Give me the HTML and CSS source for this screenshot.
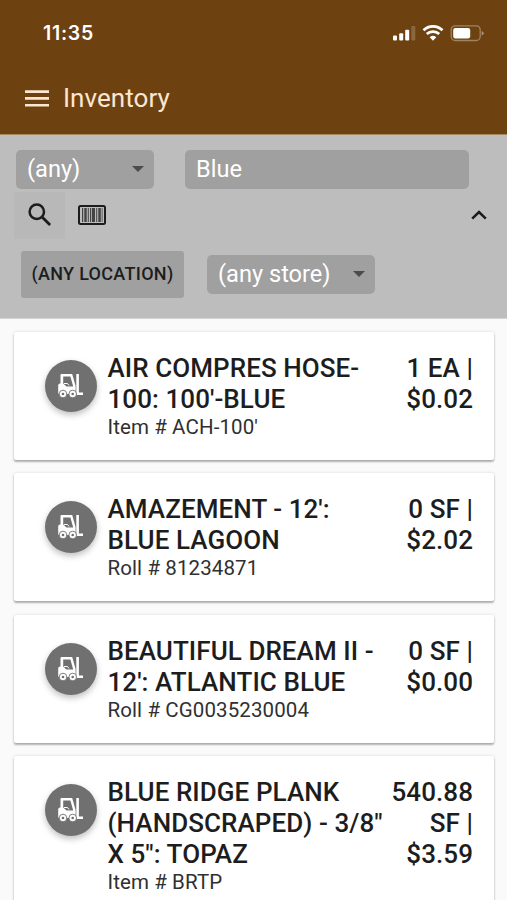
FILE: index.html
```html
<!DOCTYPE html>
<html lang="en">
<head>
<meta charset="utf-8">
<title>Inventory</title>
<link rel="stylesheet" href="styles.css">
</head>
<body>
<svg class="defs" aria-hidden="true">
  <symbol id="forklift" viewBox="0 0 26 24">
    <path fill="currentColor" fill-rule="evenodd" d="M3.500 0h10.700l3.400 12V20H1.200Q.2 20 .2 19V11.500Q.2 9.500 2 9.500h.5V1.200Q2.500 0 3.500 0zM5.200 2.400V9.500L8.500 12.400h6.700L12.400 2.400z"/>
    <path fill="currentColor" d="M18.300 0h2.600v18.500H25v2.600h-6.700z"/>
    <path fill="none" stroke="currentColor" stroke-width="1" d="M6 9.500h3.500l1.500 2"/>
    <g fill="currentColor" stroke="#707070" stroke-width=".9"><circle cx="5" cy="20" r="3.800"/><circle cx="14.700" cy="20" r="3.800"/></g>
    <g fill="#707070"><circle cx="5" cy="20" r="1.300"/><circle cx="14.700" cy="20" r="1.300"/></g>
  </symbol>
</svg>
<header class="top">
  <div class="status">
    <span class="time">11:35</span>
    <svg class="indicators" width="92" height="18" viewBox="0 0 92 18" fill="#fff">
      <rect x="1" y="11.500" width="4" height="5" rx="1"/>
      <rect x="7.200" y="9.200" width="4" height="7.300" rx="1"/>
      <rect x="13.200" y="5.800" width="4" height="10.700" rx="1"/>
      <rect x="19.300" y="2" width="4" height="14.500" rx="1" opacity=".2"/>
      <g fill="none" stroke="#fff" stroke-width="2.800"><path d="M31.500 6.300a13.400 13.400 0 0 1 19 0"/><path d="M34.800 10.100a8.800 8.800 0 0 1 12.400 0"/></g>
      <path d="M41 16.800l-3.300-3.600a5 5 0 0 1 6.600 0z"/>
      <rect x="59.200" y="1.900" width="29" height="14.600" rx="4" fill="none" stroke="#fff" stroke-width="1.300" opacity=".35"/>
      <rect x="61.200" y="3.900" width="17" height="10.600" rx="2.200"/>
      <path d="M89.700 7q2 .7 2 2.200t-2 2.200z" opacity=".45"/>
    </svg>
  </div>
  <div class="bar">
    <svg class="menu" width="24" height="17" viewBox="0 0 24 17" fill="currentColor"><path d="M0 .2h24v2.700H0zM0 7.100h24v2.700H0zM0 13.900h24v2.700H0z"/></svg>
    <h1>Inventory</h1>
  </div>
</header>
<section class="filters">
  <div class="row fields">
    <div class="field any">(any)<i class="caret"></i></div>
    <div class="field search">Blue</div>
  </div>
  <div class="row tools">
    <button class="find" aria-label="Search"><svg width="24" height="24" viewBox="0 0 24 24" fill="none" stroke="#1c1c1c"><circle cx="8.800" cy="8.800" r="7.200" stroke-width="2.500"/><path d="M14.300 14.300l7.800 7.800" stroke-width="2.800"/></svg></button>
    <svg class="barcode" width="28" height="20" viewBox="0 0 28 20"><rect x="1" y="1" width="26" height="18" rx="1.500" fill="none" stroke="#1c1c1c" stroke-width="2"/><path fill="#444" d="M4 3h1.200v14H4zM6.300 3h2.400v14H6.300zM9.800 3h1v14h-1zM12 3h1.200v14H12zM14 3h3v14h-3zM18.200 3h1v14h-1zM20.300 3h2.500v14h-2.500zM23.700 3h.8v14h-.8z"/></svg>
    <svg class="chevron" width="16" height="10" viewBox="0 0 16 10" fill="none" stroke="#1c1c1c" stroke-width="2.500"><path d="M1.200 8.700L8 2l6.800 6.700"/></svg>
  </div>
  <div class="row places">
    <button class="location">(ANY LOCATION)</button>
    <div class="field store">(any store)<i class="caret"></i></div>
  </div>
</section>
<main>
  <article class="card">
    <span class="badge"><svg width="26" height="24"><use href="#forklift"/></svg></span>
    <div class="info"><h2>AIR COMPRES HOSE-<br>100: 100'-BLUE</h2><p>Item # ACH-100'</p></div>
    <div class="price">1 EA |<br>$0.02</div>
  </article>
  <article class="card">
    <span class="badge"><svg width="26" height="24"><use href="#forklift"/></svg></span>
    <div class="info"><h2>AMAZEMENT - 12':<br>BLUE LAGOON</h2><p>Roll # 81234871</p></div>
    <div class="price">0 SF |<br>$2.02</div>
  </article>
  <article class="card">
    <span class="badge"><svg width="26" height="24"><use href="#forklift"/></svg></span>
    <div class="info"><h2>BEAUTIFUL DREAM II -<br>12': ATLANTIC BLUE</h2><p>Roll # CG0035230004</p></div>
    <div class="price">0 SF |<br>$0.00</div>
  </article>
  <article class="card">
    <span class="badge"><svg width="26" height="24"><use href="#forklift"/></svg></span>
    <div class="info"><h2>BLUE RIDGE PLANK<br>(HANDSCRAPED) - 3/8"<br>X 5": TOPAZ</h2><p>Item # BRTP</p></div>
    <div class="price">540.88<br>SF |<br>$3.59</div>
  </article>
</main>
</body>
</html>
```
FILE: styles.css
```css
* { box-sizing: border-box; }
body {
  margin: 0;
  height: 900px;
  overflow: hidden;
  background: #fafafa;
  color: #1d1d1d;
  font-family: Roboto, sans-serif;
}
h1, h2, p { margin: 0; }
button { border: 0; padding: 0; font-family: inherit; color: inherit; }
.defs { display: none; }

.top { height: 135px; background: #6d4210; border-bottom: 1px solid #a58a60; }
.status {
  display: flex;
  justify-content: space-between;
  align-items: center;
  height: 66px;
  padding: 0 23px 0 43px;
}
.time { color: #fff; font: 600 19.5px/24px Inter, sans-serif; letter-spacing: .7px; }
.indicators { display: block; }
.bar { display: flex; align-items: center; height: 64px; padding-left: 25px; color: #fbe6d2; }
.menu { display: block; margin-right: 14px; }
h1 { font-size: 26px; font-weight: 400; line-height: 32px; letter-spacing: .05px; }

.filters { height: 184px; padding-top: 15px; background: #bdbdbd; border-bottom: 1px solid #d4d4d4; }
.row { display: flex; }
.field {
  display: flex;
  align-items: center;
  justify-content: space-between;
  height: 39px;
  padding: 0 10px 2px 11px;
  border-radius: 5px;
  background: #a0a0a0;
  color: #fff;
  font-size: 23.600px;
}
.caret { border: 6.5px solid transparent; border-top-color: #4b4b4b; border-bottom: 0; margin-top: 1px; }
.fields { padding-left: 16px; gap: 31px; }
.any { width: 138px; }
.search { width: 284px; }
.tools { align-items: center; height: 49px; margin-top: 2px; padding: 0 20px 0 14px; }
.find { display: flex; align-items: center; justify-content: center; width: 51px; height: 47px; background: #b8b8b8; }
.find svg { margin-top: -2px; }
.barcode { margin: 0 0 1px 13px; }
.chevron { margin: 0 0 2px auto; }
.places { align-items: center; gap: 23px; height: 47px; margin-top: 11px; padding-left: 21px; }
.location {
  width: 163px;
  height: 47px;
  padding-bottom: 3px;
  border-radius: 3px;
  background: #a0a0a0;
  font-size: 18px;
  font-weight: 500;
  letter-spacing: .3px;
}
.store { width: 168px; }

main { display: flex; flex-direction: column; gap: 13.4px; padding: 13px 13px 0 14px; }
.card {
  display: flex;
  flex: none;
  height: 128px;
  padding: 21px 21px 0 31px;
  border-radius: 2px;
  background: #fff;
  box-shadow: 0 2px 2px rgba(0,0,0,.28), 0 0 3px rgba(0,0,0,.14);
}
.card:last-child { height: 160px; }
.badge {
  display: flex;
  align-items: center;
  justify-content: center;
  width: 52px;
  height: 52px;
  margin: 7px 10.500px 0 0;
  border-radius: 50%;
  background: #707070;
  color: #fff;
  box-shadow: 0 3px 6px rgba(0,0,0,.25);
}
.info { flex: 1; white-space: nowrap; }
h2, .price { font-size: 26px; font-weight: 500; line-height: 31px; letter-spacing: .07px; }
p { font-size: 20.500px; line-height: 25px; color: #303030; letter-spacing: .1px; }
.price { text-align: right; white-space: nowrap; }
```
